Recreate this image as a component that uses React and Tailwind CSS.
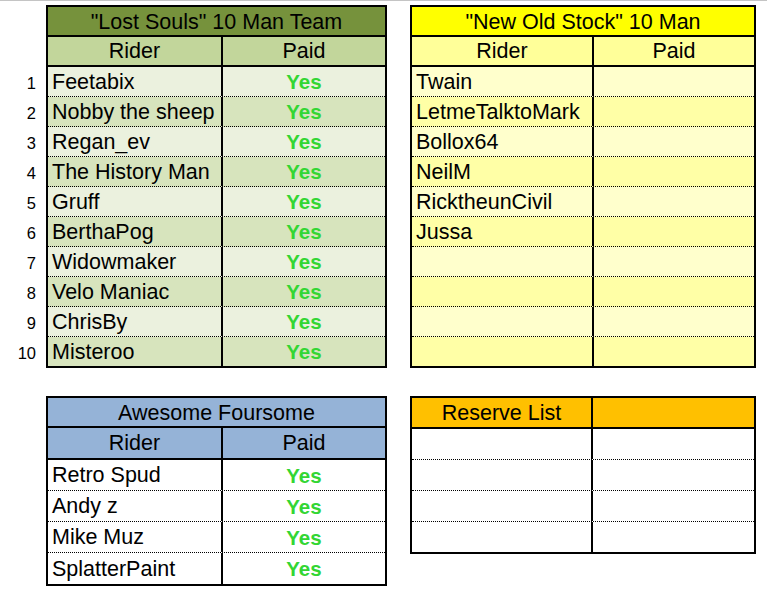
const font = { fontFamily: '"Liberation Sans", Arial, sans-serif' };

const lostSouls = [
  "Feetabix", "Nobby the sheep", "Regan_ev", "The History Man", "Gruff",
  "BerthaPog", "Widowmaker", "Velo Maniac", "ChrisBy", "Misteroo",
];
const newOldStock = ["Twain", "LetmeTalktoMark", "Bollox64", "NeilM", "RicktheunCivil", "Jussa", "", "", "", ""];
const foursome = ["Retro Spud", "Andy z", "Mike Muz", "SplatterPaint"];

/* ── one data row: name cell | paid cell ── */
function Row({ name, paid, bg, last, left, h = "h-[30px]" }) {
  return (
    <div className={`flex ${h} ${bg} ${last ? "" : "border-b border-dotted border-black"}`}>
      <div className={`${left} shrink-0 border-r-2 border-black pl-[4px] pt-[2px] flex items-center text-[21.5px] text-black leading-none`}>
        {name}
      </div>
      <div className="flex-1 pt-[2px] flex items-center justify-center text-[20.5px] font-bold text-[#33d633] leading-none">
        {paid ? "Yes" : ""}
      </div>
    </div>
  );
}

function HeaderRow({ bg, left, h = "h-[30px]" }) {
  return (
    <div className={`flex ${h} ${bg} border-b-2 border-black text-[21.5px] leading-none`}>
      <div className={`${left} shrink-0 border-r-2 border-black pt-[2px] flex items-center justify-center`}>Rider</div>
      <div className="flex-1 pt-[2px] flex items-center justify-center">Paid</div>
    </div>
  );
}

function TitleRow({ bg, children }) {
  return (
    <div className={`h-[30px] ${bg} border-b-2 border-black pt-[3px] flex items-center justify-center text-[21.5px] leading-none`}>
      {children}
    </div>
  );
}

export default function App() {
  return (
    <div className="w-[767px] h-[590px] bg-white border-t border-[#c4c4c4] overflow-hidden text-black" style={font}>
      <div className="pt-[4px] flex">
        {/* ── row numbers ── */}
        <div className="w-[46px] shrink-0 pt-[62px] flex flex-col">
          {lostSouls.map((_, i) => (
            <div key={i} className="h-[30px] pt-[2px] flex items-center justify-end pr-[10px] text-[16.5px] leading-none">
              {i + 1}
            </div>
          ))}
        </div>

        {/* ── Lost Souls ── */}
        <div className="w-[341px] shrink-0 border-2 border-black">
          <TitleRow bg="bg-[#76923c]">"Lost Souls" 10 Man Team</TitleRow>
          <HeaderRow bg="bg-[#c2d69b]" left="w-[175px]" />
          {lostSouls.map((n, i) => (
            <Row
              key={n}
              name={n}
              paid
              left="w-[175px]"
              bg={i % 2 === 0 ? "bg-[#ebf1de]" : "bg-[#d7e4bd]"}
              last={i === lostSouls.length - 1}
              h={i === lostSouls.length - 1 ? "h-[29px]" : "h-[30px]"}
            />
          ))}
        </div>

        {/* ── New Old Stock ── */}
        <div className="ml-[23px] w-[346px] shrink-0 border-2 border-black">
          <TitleRow bg="bg-[#ffff00]">"New Old Stock" 10 Man</TitleRow>
          <HeaderRow bg="bg-[#ffff99]" left="w-[182px]" />
          {newOldStock.map((n, i) => (
            <Row
              key={i}
              name={n}
              left="w-[182px]"
              bg={i % 2 === 0 ? "bg-[#ffffcc]" : "bg-[#ffffa6]"}
              last={i === newOldStock.length - 1}
              h={i === newOldStock.length - 1 ? "h-[29px]" : "h-[30px]"}
            />
          ))}
        </div>
      </div>

      <div className="mt-[28px] flex">
        <div className="w-[46px] shrink-0" />

        {/* ── Awesome Foursome ── */}
        <div className="w-[341px] shrink-0 border-2 border-black">
          <TitleRow bg="bg-[#95b3d7]">Awesome Foursome</TitleRow>
          <HeaderRow bg="bg-[#95b3d7]" left="w-[175px]" h="h-[32px]" />
          {foursome.map((n, i) => (
            <Row key={n} name={n} paid left="w-[175px]" bg="bg-white" last={i === foursome.length - 1} h="h-[31px]" />
          ))}
        </div>

        {/* ── Reserve List ── */}
        <div className="ml-[23px] w-[346px] shrink-0 self-start border-2 border-black">
          <div className="flex h-[31px] bg-[#ffc000] border-b-2 border-black text-[21.5px] leading-none">
            <div className="w-[181px] shrink-0 border-r-2 border-black pt-[3px] flex items-center justify-center">Reserve List</div>
            <div className="flex-1" />
          </div>
          {[0, 1, 2, 3].map((i) => (
            <Row key={i} name="" left="w-[181px]" bg="bg-white" last={i === 3} h={i === 3 ? "h-[30px]" : "h-[31px]"} />
          ))}
        </div>
      </div>
    </div>
  );
}
